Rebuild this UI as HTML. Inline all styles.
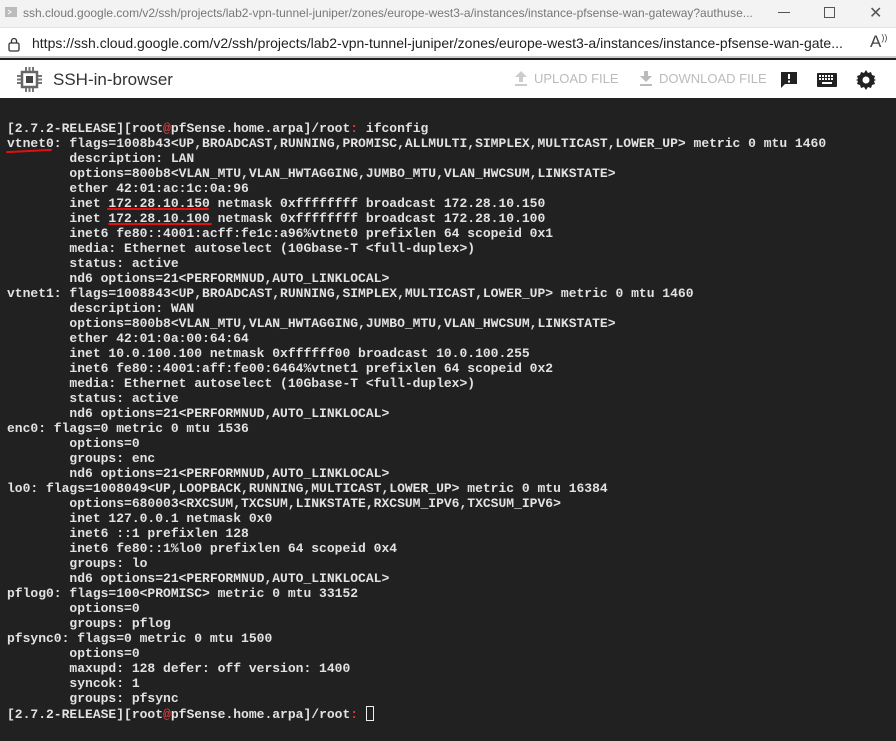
<!DOCTYPE html>
<html><head><meta charset="utf-8"><style>
*{margin:0;padding:0;box-sizing:border-box}
body{width:896px;height:741px;overflow:hidden;background:#212121;font-family:"Liberation Sans",sans-serif;position:relative}
.tb{position:absolute;top:0;left:0;width:896px;height:27px;background:#f3f3f3;color:#777;font-size:12px;white-space:nowrap}
.ab{position:absolute;top:27px;left:0;width:896px;height:31px;background:#fff;border-bottom:2px solid #ccc;border-top:1px solid #e3e3e3;font-size:14px;color:#222;white-space:nowrap}
.app{position:absolute;top:60px;left:0;width:896px;height:38px;background:#fff}
pre{position:absolute;top:121px;left:7px;font-family:"Liberation Mono",monospace;font-size:13px;line-height:15px;color:#e2e2e2;font-weight:bold;white-space:pre}
.r{color:#e03a3a}
.u{position:absolute;height:2px;background:#e01010;border-radius:2px}
</style></head><body>
<div class="tb">
<svg style="position:absolute;left:4px;top:6px" width="14" height="14"><rect x="1" y="1" width="12" height="10" fill="#bbb"/><path d="M4 4l3 2-3 2" stroke="#fff" fill="none"/></svg>
<span style="position:absolute;left:23px;top:6px">ssh.cloud.google.com/v2/ssh/projects/lab2-vpn-tunnel-juniper/zones/europe-west3-a/instances/instance-pfsense-wan-gateway?authuse...</span>
<div style="position:absolute;left:778px;top:12px;width:12px;height:1px;background:#555"></div>
<div style="position:absolute;left:824px;top:7px;width:11px;height:11px;border:1px solid #555"></div>
<span style="position:absolute;left:869px;top:3px;font-size:16px;color:#555">✕</span>
</div>
<div class="ab">
<svg style="position:absolute;left:7px;top:8px" width="14" height="16"><rect x="2" y="7" width="10" height="8" rx="1.5" fill="none" stroke="#333" stroke-width="1.3"/><path d="M4.5 7V5a2.5 2.5 0 0 1 5 0v2" fill="none" stroke="#333" stroke-width="1.3"/></svg>
<span style="position:absolute;left:32px;top:7px">https://ssh.cloud.google.com/v2/ssh/projects/lab2-vpn-tunnel-juniper/zones/europe-west3-a/instances/instance-pfsense-wan-gate...</span>
<span style="position:absolute;left:870px;top:4px;font-size:17px;color:#444">A<sup style="font-size:9px">))</sup></span>
</div>
<div class="app">
<svg style="position:absolute;left:16px;top:6px" width="27" height="27" viewBox="0 0 27 27"><rect x="6" y="6" width="15" height="15" fill="none" stroke="#666" stroke-width="2.5"/><rect x="10" y="10" width="7" height="7" fill="#444"/><g stroke="#777" stroke-width="2"><path d="M10 1v4M13.5 1v4M17 1v4M10 22v4M13.5 22v4M17 22v4M1 10h4M1 13.5h4M1 17h4M22 10h4M22 13.5h4M22 17h4"/></g></svg>
<span style="position:absolute;left:53px;top:10px;font-size:17px;color:#333">SSH-in-browser</span>
<svg style="position:absolute;left:514px;top:10px" width="14" height="16"><path d="M7 1l6 6H9v5H5V7H1z M1 14h12v2H1z" fill="#ccc"/></svg>
<span style="position:absolute;left:534px;top:11px;font-size:13px;color:#bbb">UPLOAD FILE</span>
<svg style="position:absolute;left:639px;top:10px" width="14" height="16"><path d="M5 1h4v5h4l-6 6-6-6h4z M1 14h12v2H1z" fill="#bbb"/></svg>
<span style="position:absolute;left:659px;top:11px;font-size:13px;color:#bbb">DOWNLOAD FILE</span>
<svg style="position:absolute;left:780px;top:11px" width="18" height="18"><path d="M1 1h16v12H5l-4 4z" fill="#222"/><rect x="8" y="3" width="2" height="5" fill="#fff"/><rect x="8" y="9.5" width="2" height="2" fill="#fff"/></svg>
<svg style="position:absolute;left:817px;top:13px" width="20" height="14"><rect width="20" height="14" rx="1" fill="#222"/><g fill="#fff"><rect x="2" y="2" width="2" height="2"/><rect x="5" y="2" width="2" height="2"/><rect x="8" y="2" width="2" height="2"/><rect x="11" y="2" width="2" height="2"/><rect x="14" y="2" width="2" height="2"/><rect x="2" y="5" width="2" height="2"/><rect x="5" y="5" width="2" height="2"/><rect x="8" y="5" width="2" height="2"/><rect x="11" y="5" width="2" height="2"/><rect x="14" y="5" width="2" height="2"/><rect x="5" y="9" width="10" height="2"/></g></svg>
<svg style="position:absolute;left:856px;top:10px" width="20" height="20" viewBox="0 0 20 20"><path d="M10 0l2 3 3-1 1 3 3 1-1 3 2 1-2 1 1 3-3 1-1 3-3-1-2 3-2-3-3 1-1-3-3-1 1-3-2-1 2-1-1-3 3-1 1-3 3 1z" fill="#222"/><circle cx="10" cy="10" r="3.5" fill="#fff"/></svg>
</div>
<pre>[2.7.2-RELEASE][root<span class="r">@</span>pfSense.home.arpa]/root<span class="r">:</span> ifconfig
vtnet0: flags=1008b43&lt;UP,BROADCAST,RUNNING,PROMISC,ALLMULTI,SIMPLEX,MULTICAST,LOWER_UP&gt; metric 0 mtu 1460
        description: LAN
        options=800b8&lt;VLAN_MTU,VLAN_HWTAGGING,JUMBO_MTU,VLAN_HWCSUM,LINKSTATE&gt;
        ether 42:01:ac:1c:0a:96
        inet 172.28.10.150 netmask 0xffffffff broadcast 172.28.10.150
        inet 172.28.10.100 netmask 0xffffffff broadcast 172.28.10.100
        inet6 fe80::4001:acff:fe1c:a96%vtnet0 prefixlen 64 scopeid 0x1
        media: Ethernet autoselect (10Gbase-T &lt;full-duplex&gt;)
        status: active
        nd6 options=21&lt;PERFORMNUD,AUTO_LINKLOCAL&gt;
vtnet1: flags=1008843&lt;UP,BROADCAST,RUNNING,SIMPLEX,MULTICAST,LOWER_UP&gt; metric 0 mtu 1460
        description: WAN
        options=800b8&lt;VLAN_MTU,VLAN_HWTAGGING,JUMBO_MTU,VLAN_HWCSUM,LINKSTATE&gt;
        ether 42:01:0a:00:64:64
        inet 10.0.100.100 netmask 0xffffff00 broadcast 10.0.100.255
        inet6 fe80::4001:aff:fe00:6464%vtnet1 prefixlen 64 scopeid 0x2
        media: Ethernet autoselect (10Gbase-T &lt;full-duplex&gt;)
        status: active
        nd6 options=21&lt;PERFORMNUD,AUTO_LINKLOCAL&gt;
enc0: flags=0 metric 0 mtu 1536
        options=0
        groups: enc
        nd6 options=21&lt;PERFORMNUD,AUTO_LINKLOCAL&gt;
lo0: flags=1008049&lt;UP,LOOPBACK,RUNNING,MULTICAST,LOWER_UP&gt; metric 0 mtu 16384
        options=680003&lt;RXCSUM,TXCSUM,LINKSTATE,RXCSUM_IPV6,TXCSUM_IPV6&gt;
        inet 127.0.0.1 netmask 0x0
        inet6 ::1 prefixlen 128
        inet6 fe80::1%lo0 prefixlen 64 scopeid 0x4
        groups: lo
        nd6 options=21&lt;PERFORMNUD,AUTO_LINKLOCAL&gt;
pflog0: flags=100&lt;PROMISC&gt; metric 0 mtu 33152
        options=0
        groups: pflog
pfsync0: flags=0 metric 0 mtu 1500
        options=0
        maxupd: 128 defer: off version: 1400
        syncok: 1
        groups: pfsync
[2.7.2-RELEASE][root<span class="r">@</span>pfSense.home.arpa]/root<span class="r">:</span> <span style="display:inline-block;width:8px;height:15px;border:1.5px solid #eee;vertical-align:-3px"></span></pre>
<div class="u" style="left:6px;top:150px;width:46px;transform:rotate(-3deg)"></div>
<div class="u" style="left:107px;top:208px;width:102px"></div>
<div class="u" style="left:108px;top:223px;width:104px"></div>
</body></html>
